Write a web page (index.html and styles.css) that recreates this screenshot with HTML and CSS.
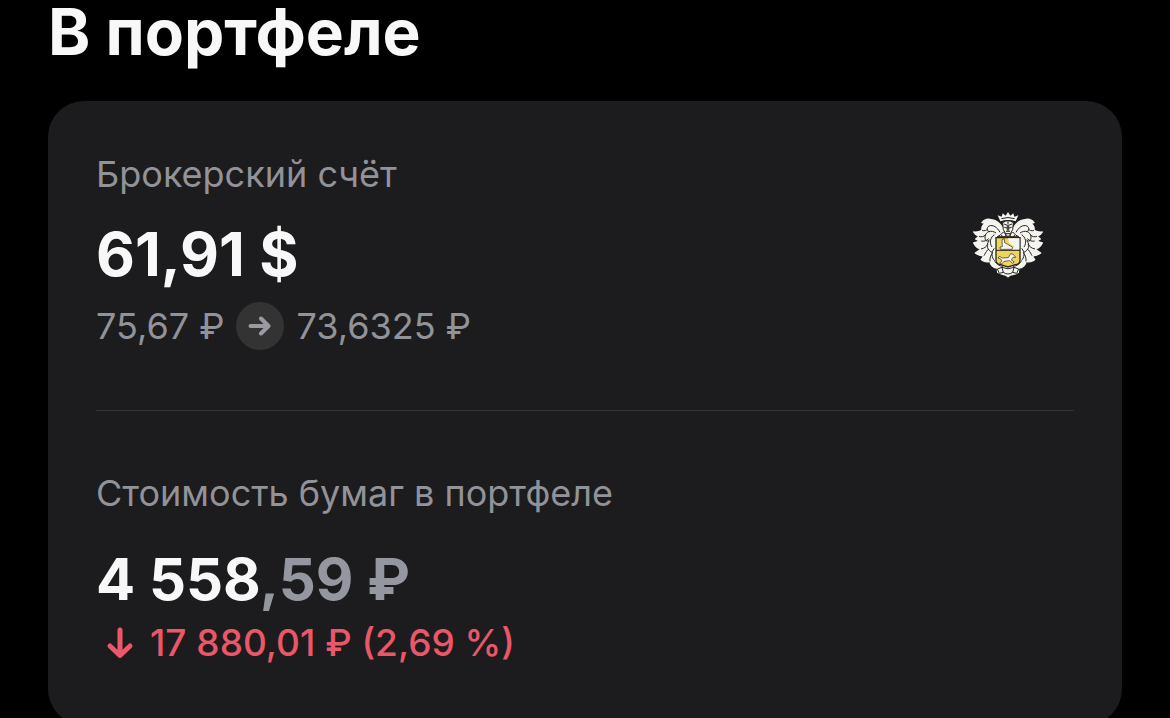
FILE: index.html
```html
<!DOCTYPE html>
<html lang="ru">
<head>
<meta charset="utf-8">
<meta name="viewport" content="width=device-width, initial-scale=1">
<title>В портфеле</title>
<link rel="stylesheet" href="styles.css">
</head>
<body>
<main class="page">
  <h1 class="title">В портфеле</h1>
  <div class="card">
    <section class="account">
      <div class="account-info">
        <h2 class="label">Брокерский счёт</h2>
        <p class="amount">61,91 $</p>
        <p class="rates">
          <span>75,67 ₽</span>
          <span class="rate-arrow">
            <svg width="24" height="24" viewBox="0 0 24 24" aria-hidden="true"><path d="M2.500 12H20M13 4.500L20.500 12L13 19.500"/></svg>
          </span>
          <span>73,6325 ₽</span>
        </p>
      </div>
      <svg class="emblem" viewBox="36 36 216 198" role="img" aria-label="Тинькофф">
        <g class="leaves">
          <path d="M128 84C120 70 108 60 94 59C83 56 72 60 66 68L76 70C67 76 64 83 66 91C57 96 49 97 41 96C45 103 50 107 57 109L47 117C52 121 57 123 62 123L41 129C46 139 54 146 63 147L46 159C54 165 63 168 72 167L64 179C72 185 82 187 90 184C90 194 100 204 112 204L113 217C120 223 130 223 137 225L144 230V104Z"/>
          <path d="M160 84C168 70 180 60 194 59C205 56 216 60 222 68L212 70C221 76 224 83 222 91C231 96 239 97 247 96C243 103 238 107 231 109L241 117C236 121 231 123 226 123L247 129C242 139 234 146 225 147L242 159C234 165 225 168 216 167L224 179C216 185 206 187 198 184C198 194 188 204 176 204L175 217C168 223 158 223 151 225L144 230V104Z"/>
        </g>
        <g class="veins">
          <path d="M120 97C112 82 99 73 87 78C78 83 81 95 90 95M108 99C94 89 76 94 75 111C74 122 83 127 88 119M66 91C73 94 80 91 84 86M57 109C64 112 71 110 76 105M103 104C91 112 87 128 96 141M64 123C72 125 80 122 86 116M88 122C76 135 82 151 98 158M63 147C73 145 80 140 84 132M84 148C77 157 75 161 72 167M103 145C92 158 95 173 104 182M90 184C89 174 92 166 97 160M104 184C112 194 119 198 129 199"/>
          <path d="M168 97C176 82 189 73 201 78C210 83 207 95 198 95M180 99C194 89 212 94 213 111C214 122 205 127 200 119M222 91C215 94 208 91 204 86M231 109C224 112 217 110 212 105M185 104C197 112 201 128 192 141M224 123C216 125 208 122 202 116M200 122C212 135 206 151 190 158M225 147C215 145 208 140 204 132M204 148C211 157 213 161 216 167M185 145C196 158 193 173 184 182M198 184C199 174 196 166 191 160M184 184C176 194 169 198 159 199"/>
        </g>
        <path class="crown" d="M121 64L113 46L125 50L128 40L137 47L144 36L151 47L160 40L163 50L175 46L167 64Q144 56 121 64Z"/>
        <path class="crown-band" d="M124 56Q144 49 164 56"/>
        <path class="helmet" d="M128 68Q144 56 160 68L158 89L151 101H137L130 89Z"/>
        <path class="helmet-lines" d="M132 72L142 76V92M156 72L146 76V92M133 82L141 84M155 82L147 84M138 94H150M144 63V74"/>
        <path class="mantle" d="M112 110Q121 107 130 96L144 110L158 96Q167 107 176 110Z"/>
        <path class="helmet-lines" d="M123 106L132 112M165 106L156 112M137 101V110M151 101V110"/>
        <path class="shield" d="M108 113H180V180Q180 193 166 194L144 201L122 194Q108 193 108 180Z"/>
        <path class="shield-white" d="M144 115H178V148H150L164 140L147 128Z"/>
        <path class="shield-split" d="M108 151H180"/>
        <path class="figure" d="M126 119L133 116L134 128L143 133L158 142L156 148H121L120 141L127 140Z"/>
        <path class="figure" d="M118 169L127 174L145 173L152 161L160 163L167 172L159 172L154 180L163 186L158 190L149 182L132 184L125 192L119 189L126 183L122 177L114 174Z"/>
        <path class="ribbon" d="M112 207L126 202Q144 211 162 202L176 207L170 220L158 217Q144 227 130 217L118 220Z"/>
        <path class="helmet-lines" d="M126 203L130 217M162 203L158 217"/>
      </svg>
    </section>
    <section class="value">
      <h2 class="label">Стоимость бумаг в портфеле</h2>
      <p class="amount">4 558<span class="minor">,59 ₽</span></p>
      <p class="change">
        <svg class="change-arrow" width="28" height="32" viewBox="0 0 28 32" aria-hidden="true"><path d="M14 3V28M4 19L14 28.500L24 19"/></svg>
        <span>17 880,01 ₽ (2,69 %)</span>
      </p>
    </section>
  </div>
</main>
</body>
</html>
```
FILE: styles.css
```css
* {
  box-sizing: border-box;
}

body {
  margin: 0;
  height: 100vh;
  overflow: hidden;
  background: #000;
  color: #f8f8f8;
  font-family: Inter, "Liberation Sans", sans-serif;
}

h1, h2, p {
  margin: 0;
}

.page {
  padding: 0 48px;
}

.title {
  font-size: 64px;
  line-height: 64px;
  font-weight: 700;
}

.card {
  margin-top: 37px;
  padding: 51px 48px 60px;
  border-radius: 36px;
  background: #1c1c1e;
}

.account {
  display: flex;
  justify-content: space-between;
  padding-bottom: 60px;
  border-bottom: 1px solid #323234;
}

.label {
  color: #929299;
  font-size: 36px;
  line-height: 44px;
  font-weight: 400;
}

.amount {
  margin-top: 22px;
  font-size: 60px;
  line-height: 72px;
  font-weight: 700;
}

.rates {
  display: flex;
  align-items: center;
  gap: 12px;
  margin-top: 12px;
  color: #929299;
  font-size: 36px;
  line-height: 44px;
}

.rate-arrow {
  display: grid;
  place-items: center;
  width: 48px;
  height: 48px;
  border-radius: 50%;
  background: #333334;
}

.rate-arrow path,
.change-arrow path {
  fill: none;
  stroke: #9a9aa3;
  stroke-width: 4;
  stroke-linecap: round;
  stroke-linejoin: round;
}

.emblem {
  width: 72px;
  height: 66px;
  margin: 60px 30px 0 0;
}

.value {
  padding-top: 60px;
}

.value .amount {
  margin-top: 28px;
  font-size: 58px;
}

.minor {
  color: #9597a0;
}

.change {
  display: flex;
  align-items: center;
  gap: 16px;
  margin-top: 6px;
  padding-left: 10px;
  color: #ea5768;
  font-size: 37px;
  line-height: 44px;
  font-weight: 500;
}

.change-arrow path {
  stroke: #ee5769;
  stroke-width: 5;
}

.leaves {
  stroke: #f5f4f0;
  stroke-width: 4;
  stroke-linejoin: round;
}

.leaves,
.crown,
.helmet,
.mantle,
.ribbon {
  fill: #f5f4f0;
}

.veins,
.crown-band,
.helmet-lines,
.shield-split {
  fill: none;
  stroke: #29251f;
  stroke-width: 3;
}

.helmet,
.mantle,
.ribbon {
  stroke: #29251f;
  stroke-width: 3;
}

.shield {
  fill: #edd65b;
  stroke: #29251f;
  stroke-width: 4;
}

.shield-white {
  fill: #f5f4f0;
}

.figure {
  fill: #f5f4f0;
  stroke: #29251f;
  stroke-width: 2;
}
```
